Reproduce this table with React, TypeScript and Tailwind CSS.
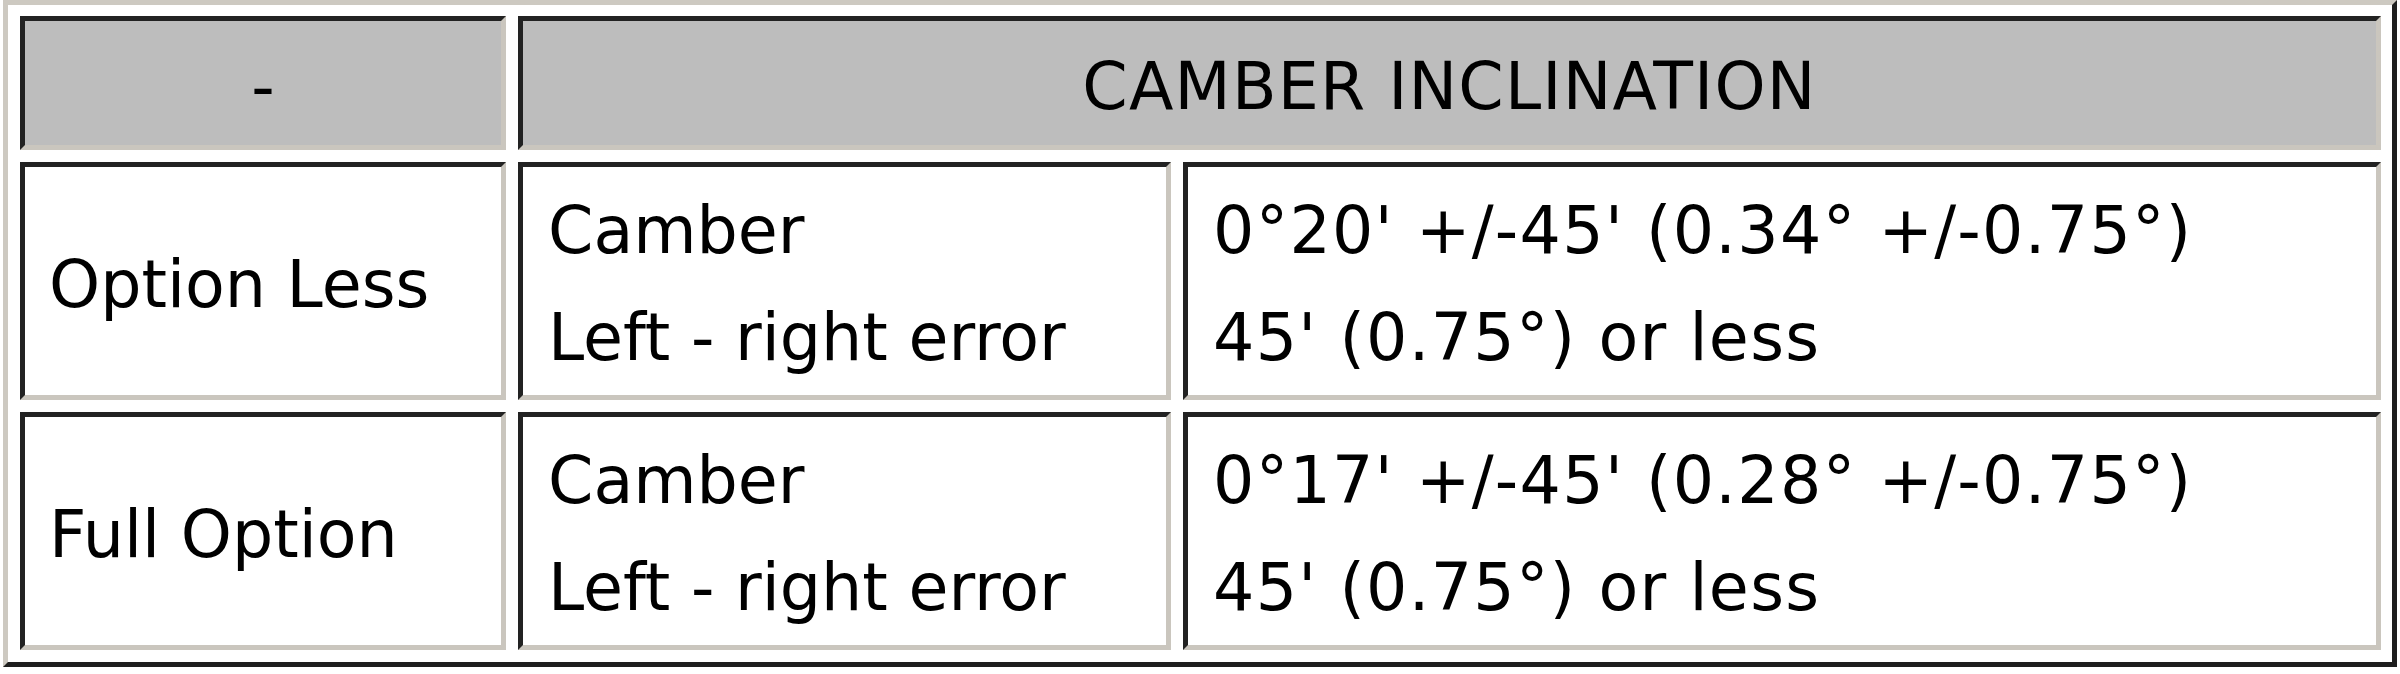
const cell =
  "border-[5px] border-t-[#222222] border-l-[#222222] border-r-[#cac6be] border-b-[#cac6be]";

interface SpecRowProps {
  option: string;
  camber: string;
}

const SpecRow = ({ option, camber }: SpecRowProps) => {
  return (
    <>
      <div className={`${cell} flex h-[238px] items-center bg-white pl-[24px] pt-[6px]`}>
        {option}
      </div>
      <div className={`${cell} flex h-[238px] flex-col justify-center bg-white pl-[25px] pt-[6px]`}>
        <span>Camber</span>
        <span>Left - right error</span>
      </div>
      <div
        className={`${cell} flex h-[238px] flex-col justify-center bg-white pl-[25px] pt-[6px] tracking-[1.3px]`}
      >
        <span>{camber}</span>
        <span>45' (0.75°) or less</span>
      </div>
    </>
  );
};

export default function App() {
  return (
    <div className="min-h-[674px] bg-white font-['DejaVu_Sans',sans-serif] text-[65px] leading-[107px] text-black">
      <div className="ml-[3px] w-[2394px] border-[5px] border-t-[#cdc9c1] border-l-[#cdc9c1] border-r-[#1e1e1e] border-b-[#1e1e1e] bg-white">
        <div className="grid grid-cols-[486px_653px_1198px] gap-3 pl-3 pr-[11px] pt-[11px] pb-3">
          <div className={`${cell} flex h-[134px] items-center justify-center bg-[#bdbdbd] pt-[6px]`}>
            -
          </div>
          <div
            className={`${cell} col-span-2 flex h-[134px] items-center justify-center bg-[#bdbdbd] pt-[6px] tracking-[1.2px]`}
          >
            CAMBER INCLINATION
          </div>
          <SpecRow option="Option Less" camber="0°20' +/-45' (0.34° +/-0.75°)" />
          <SpecRow option="Full Option" camber="0°17' +/-45' (0.28° +/-0.75°)" />
        </div>
      </div>
    </div>
  );
}
